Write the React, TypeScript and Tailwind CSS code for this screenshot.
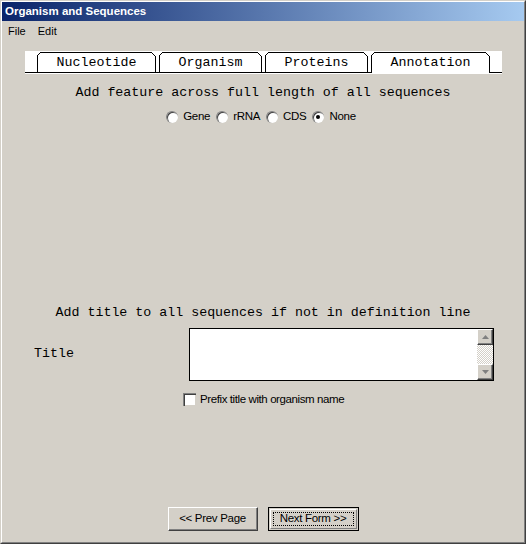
import React, { useState } from 'react';

const mono = { fontFamily: '"Liberation Mono", "Courier New", monospace' };
const narrow = { fontFamily: '"Liberation Sans", Arial, sans-serif' };
const sans = { fontFamily: 'Tahoma, "Liberation Sans", Arial, sans-serif' };

interface TabDef {
  label: string;
  width: number;
}

const tabs: TabDef[] = [
  { label: 'Nucleotide', width: 119 },
  { label: 'Organism', width: 103 },
  { label: 'Proteins', width: 103 },
  { label: 'Annotation', width: 119 },
];

const Tab: React.FC<{ tab: TabDef; selected: boolean }> = ({ tab, selected }) => {
  const w = tab.width;
  return (
    <div className="relative h-[23px] flex items-center justify-center text-[13.3px] text-black" style={{ width: w, ...mono }}>
      <svg className="absolute inset-0" width={w} height={23}>
        <path
          d={`M0.5 22 V4.5 L3.5 1.5 H${w - 4.5} L${w - 0.5} 5.5 V22`}
          fill="none"
          stroke="#000"
          strokeWidth={1}
          shapeRendering="crispEdges"
        />
        {!selected && <line x1={0} y1={21.5} x2={w} y2={21.5} stroke="#000" strokeWidth={1} shapeRendering="crispEdges" />}
      </svg>
      <span className="relative">{tab.label}</span>
    </div>
  );
};

const Radio: React.FC<{ checked: boolean; label: string; onClick: () => void }> = ({ checked, label, onClick }) => (
  <label className="flex items-center gap-[5px] cursor-default" onClick={onClick}>
    <span className="relative w-[12px] h-[12px] rounded-full bg-white border-t border-l border-[#808080] border-r-white border-b-white shadow-[inset_1px_1px_0_#404040]">
      {checked && <span className="absolute left-[3px] top-[3px] w-[4px] h-[4px] rounded-full bg-black" />}
    </span>
    <span className="text-[11.5px] tracking-[-0.3px] text-black mr-[4px]">{label}</span>
  </label>
);

export default function App() {
  const [feature, setFeature] = useState('None');
  const [prefix, setPrefix] = useState(false);

  return (
    <div className="w-[526px] h-[544px] bg-[#d4d0c8] border-t border-l border-[#d4d0c8] border-r border-b border-r-[#404040] border-b-[#404040]">
      <div className="flex flex-col h-full border-t border-l border-white border-r border-b border-r-[#808080] border-b-[#808080]">
        <div
          className="h-[19px] shrink-0 flex items-center pl-[3px] text-white text-[11.5px] font-bold bg-[linear-gradient(to_right,#0a246a,#a6caf0)]"
          style={sans}
        >
          Organism and Sequences
        </div>

        <div className="h-[20px] shrink-0 flex items-center gap-[12px] pl-[6px] text-[11px] text-black" style={sans}>
          <span>File</span>
          <span>Edit</span>
        </div>

        <div className="mt-[10px] ml-[23px] w-[477px] h-[23px] bg-white flex items-start shrink-0">
          <div className="w-[12px] h-[22px] border-b border-black" />
          {tabs.map((t, i) => (
            <React.Fragment key={t.label}>
              {i > 0 && <div className="w-[3px] h-[22px] border-b border-black" />}
              <Tab tab={t} selected={t.label === 'Annotation'} />
            </React.Fragment>
          ))}
          <div className="flex-1 h-[22px] border-b border-black" />
        </div>

        <div className="mt-[11px] h-[16px] flex items-center justify-center text-[13.3px] text-black" style={mono}>
          Add feature across full length of all sequences
        </div>

        <div className="mt-[8px] h-[16px] flex items-center justify-center gap-[2px]" style={narrow}>
          {['Gene', 'rRNA', 'CDS', 'None'].map((f) => (
            <Radio key={f} label={f} checked={feature === f} onClick={() => setFeature(f)} />
          ))}
        </div>

        <div className="mt-[180px] h-[16px] flex items-center justify-center text-[13.3px] text-black" style={mono}>
          Add title to all sequences if not in definition line
        </div>

        <div className="mt-[7px] flex items-center">
          <div className="w-[155px] pl-[32px] -mt-[2px] text-[13.3px] text-black" style={mono}>
            Title
          </div>
          <div className="ml-[32px] flex h-[53px] w-[305px] border border-black bg-white">
            <div className="flex-1" />
            <div className="w-[16px] flex flex-col bg-[repeating-conic-gradient(#d4d0c8_0_25%,#ffffff_0_50%)] bg-[length:2px_2px]">
              <div className="h-[16px] bg-[#d4d0c8] border-t border-l border-white border-r border-b border-r-[#404040] border-b-[#404040] shadow-[inset_-1px_-1px_0_#808080] flex items-center justify-center">
                <svg width="7" height="4" viewBox="0 0 7 4">
                  <path d="M3.5 0 L7 4 H0 Z" fill="#808080" />
                </svg>
              </div>
              <div className="flex-1" />
              <div className="h-[16px] bg-[#d4d0c8] border-t border-l border-white border-r border-b border-r-[#404040] border-b-[#404040] shadow-[inset_-1px_-1px_0_#808080] flex items-center justify-center">
                <svg width="7" height="4" viewBox="0 0 7 4">
                  <path d="M0 0 H7 L3.5 4 Z" fill="#808080" />
                </svg>
              </div>
            </div>
          </div>
        </div>

        <div className="mt-[10px] ml-[181px] flex items-center gap-[4px]" style={narrow} onClick={() => setPrefix(!prefix)}>
          <span className="relative w-[13px] h-[13px] bg-white border-t border-l border-[#808080] border-r-white border-b-white shadow-[inset_1px_1px_0_#404040,inset_-1px_-1px_0_#d4d0c8]">
            {prefix && <span className="absolute left-[3px] top-[1px] text-[10px] leading-none">✓</span>}
          </span>
          <span className="text-[11.5px] tracking-[-0.4px] text-black">Prefix title with organism name</span>
        </div>

        <div className="mt-auto mb-[11px] flex justify-center gap-[10px]" style={narrow}>
          <button className="w-[90px] h-[24px] bg-[#d4d0c8] border-t border-l border-white border-r border-b border-r-[#404040] border-b-[#404040] shadow-[inset_-1px_-1px_0_#808080] text-[11.5px] tracking-[-0.3px] text-black">
            &lt;&lt; Prev Page
          </button>
          <button className="w-[91px] h-[24px] bg-[#d4d0c8] border border-black p-[1px] text-[11.5px] tracking-[-0.3px] text-black">
            <div className="h-full border-t border-l border-white border-r border-b border-r-[#808080] border-b-[#808080] p-[2px]">
              <div className="h-full flex items-center justify-center border border-dotted border-black">Next Form &gt;&gt;</div>
            </div>
          </button>
        </div>
      </div>
    </div>
  );
}
